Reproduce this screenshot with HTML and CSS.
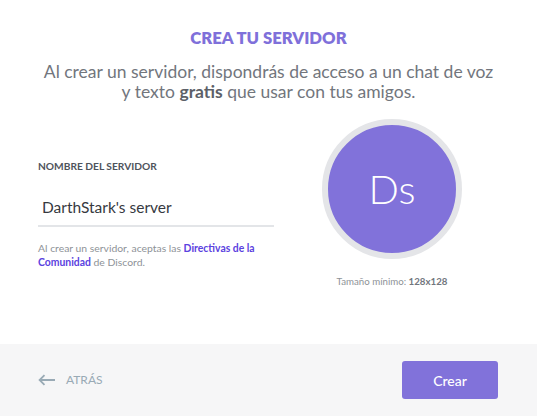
FILE: index.html
```html
<!DOCTYPE html>
<html lang="es">
<head>
<meta charset="utf-8">
<title>Crea tu servidor</title>
<link rel="stylesheet" href="styles.css">
</head>
<body>
<div class="modal">
  <div class="modal-body">
    <h1 class="title">CREA TU SERVIDOR</h1>
    <p class="subtitle">Al crear un servidor, dispondrás de acceso a un chat de voz<br>y texto <strong>gratis</strong> que usar con tus amigos.</p>
    <div class="form-row">
      <div class="form-col">
        <div class="label">NOMBRE DEL SERVIDOR</div>
        <div class="input">DarthStark's server</div>
        <p class="help">Al crear un servidor, aceptas las <b class="link">Directivas de la</b><br><b class="link">Comunidad</b> de Discord.</p>
      </div>
      <div class="avatar-col">
        <div class="avatar"><span>Ds</span></div>
        <div class="caption">Tamaño mínimo: <strong>128x128</strong></div>
      </div>
    </div>
  </div>
  <div class="footer">
    <div class="back">
      <svg class="back-icon" width="18" height="12" viewBox="0 0 18 12"><path d="M17 6H2M6.5 1.2L1.6 6l4.9 4.8" fill="none" stroke="#99aab5" stroke-width="1.8"/></svg>
      <span>ATRÁS</span>
    </div>
    <button class="btn">Crear</button>
  </div>
</div>
</body>
</html>
```
FILE: styles.css
```css
* { box-sizing: border-box; }
html, body { margin: 0; padding: 0; background: #fff; }
body { font-family: Lato, "Noto Sans", sans-serif; }
.modal { width: 537px; height: 416px; display: flex; flex-direction: column; background: #fff; }
.modal-body { flex: 1; padding: 28px 30px 0 38px; }
.title { margin: 0 0 0 -8px; text-align: center; font-size: 16.7px; line-height: 20px; font-weight: 800; color: #7f70da; }
.subtitle { margin: 14px 0 0 -8px; text-align: center; font-size: 17.5px; line-height: 20px; color: #72767d; white-space: nowrap; }
.subtitle strong { font-weight: 700; color: #5c6068; }
.form-row { display: flex; gap: 48px; margin-top: 17px; }
.form-col { width: 236px; padding-top: 41px; }
.label { font-size: 10.2px; line-height: 12px; font-weight: 700; color: #4f545c; }
.input { margin-top: 25px; padding: 0 5px 8px 4px; font-size: 15.5px; line-height: 20px; color: #36393f; border-bottom: 2px solid #e3e5e8; }
.help { margin: 14px 0 0; font-size: 10.4px; line-height: 14px; color: #8e9297; white-space: nowrap; }
.link { color: #5b42e0; font-weight: 700; }
.avatar-col { width: 140px; display: flex; flex-direction: column; align-items: center; }
.avatar { width: 140px; height: 140px; border-radius: 50%; border: 6px solid #e4e5e8; background: #8172da; display: flex; align-items: center; justify-content: center; }
.avatar span { color: #fff; font-size: 40px; font-weight: 300; }
.caption { margin-top: 16px; font-size: 9.7px; line-height: 12px; color: #8e9297; white-space: nowrap; }
.caption strong { color: #72767d; }
.footer { height: 72px; background: #f6f6f7; display: flex; align-items: center; justify-content: space-between; padding: 0 39px 0 38px; }
.back { display: flex; align-items: center; gap: 10px; color: #99aab5; font-size: 12px; margin-top: -1px; }
.btn { width: 96px; height: 38px; border: 0; border-radius: 3px; background: #8172da; color: #fff; font-family: inherit; font-size: 14px; font-weight: 500; }
```
